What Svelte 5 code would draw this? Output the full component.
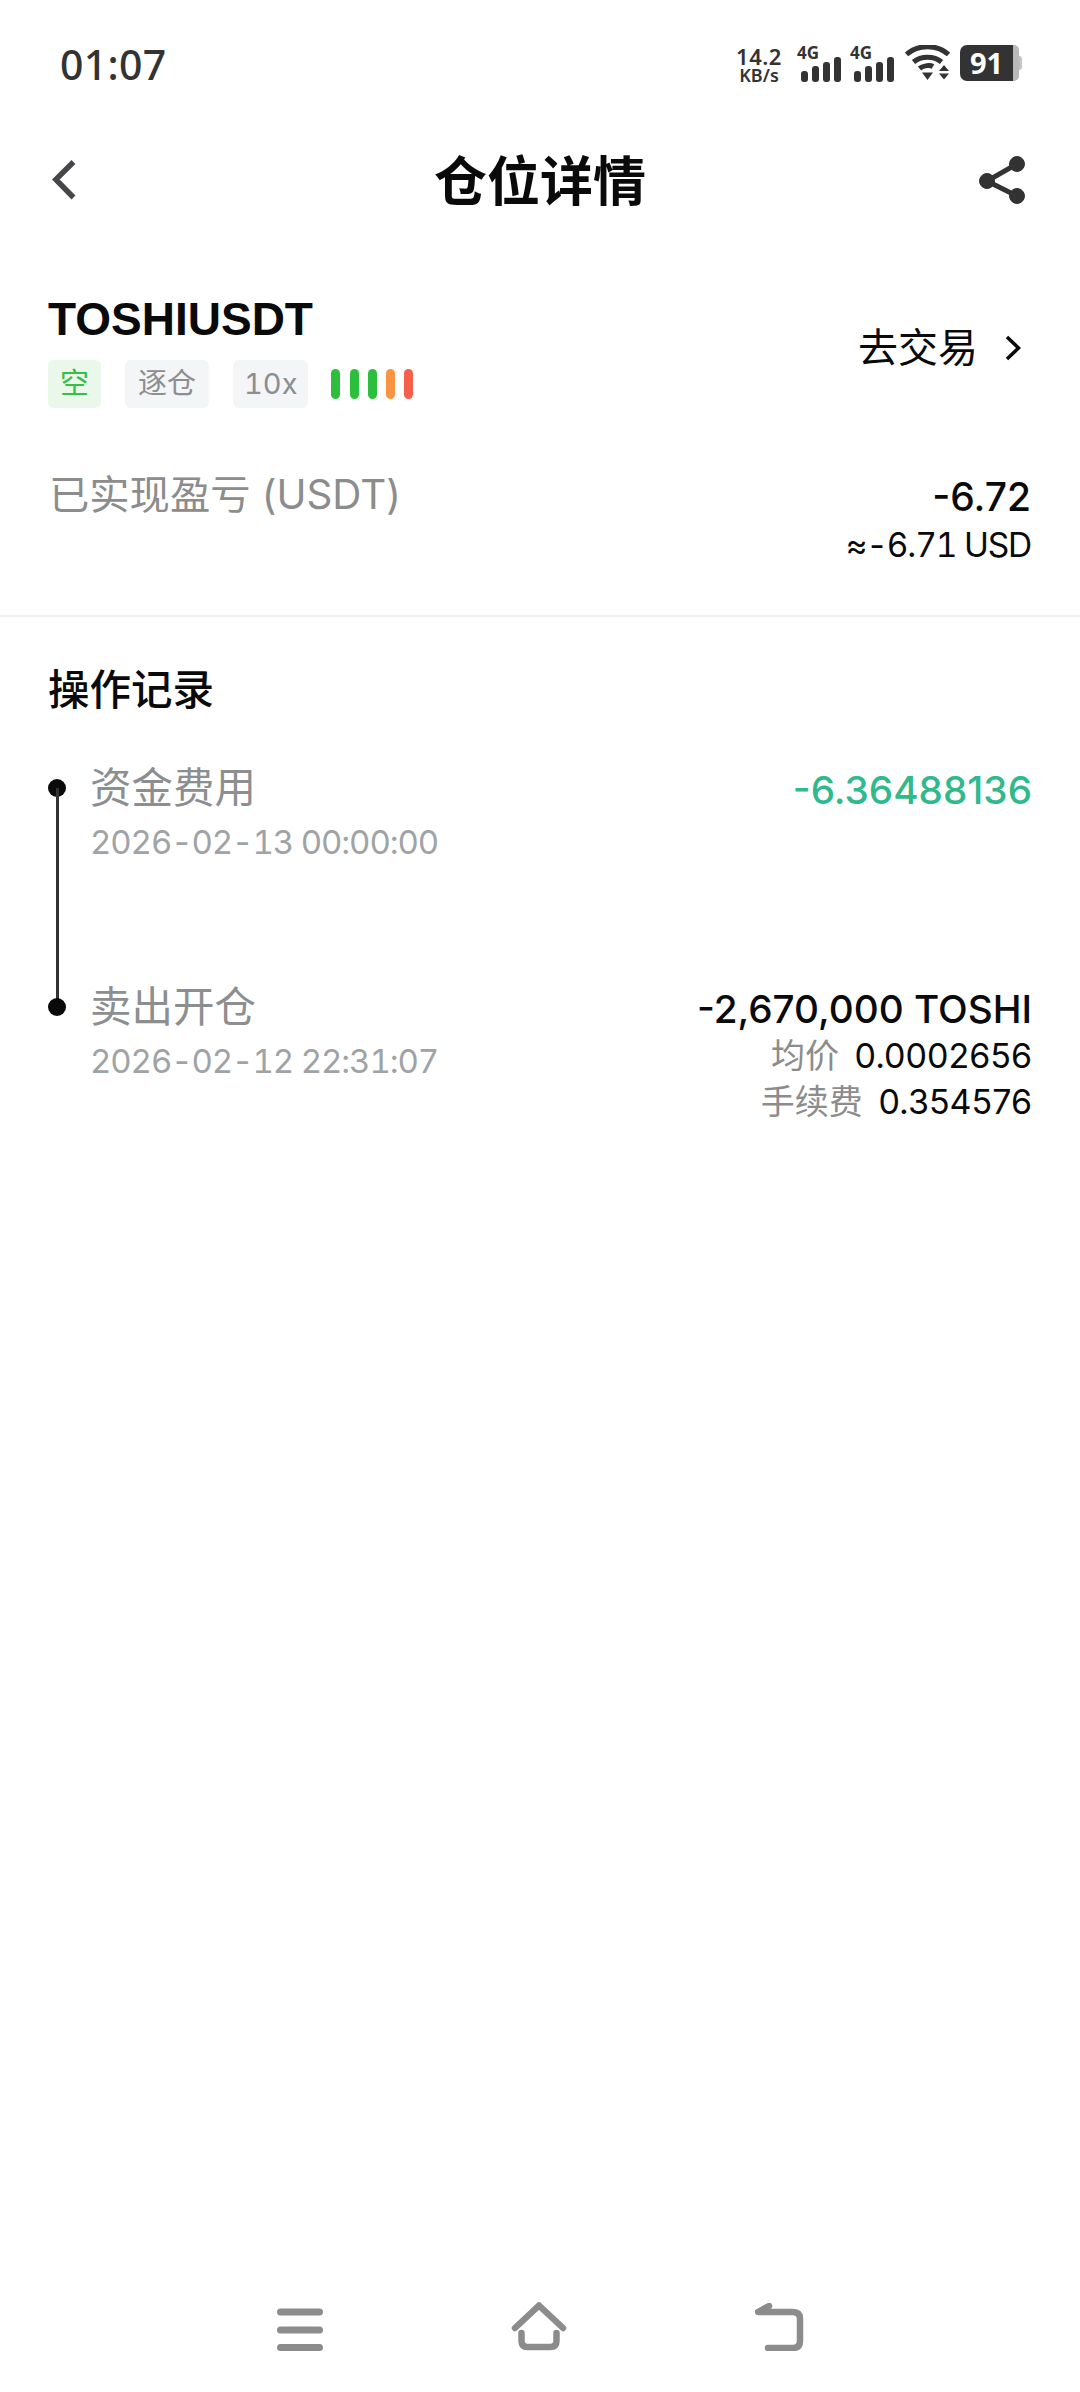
<script>
  const bars = ['#2dbe3c', '#2dbe3c', '#2dbe3c', '#f99443', '#f5604c'];
</script>

<div class="page">
  <header class="status">
    <span class="time">01:07</span>
    <div class="indicators">
      <div class="speed"><span>14.2</span><span class="unit">KB/s</span></div>
      {#each [0, 1] as s}
        <div class="net">
          <span class="g">4G</span>
          <svg width="40" height="25" viewBox="0 0 40 25" fill="#333">
            <rect x="0" y="14" width="7" height="11" rx="3" />
            <rect x="11" y="9" width="7" height="16" rx="3" />
            <rect x="22" y="5" width="7" height="20" rx="3" />
            <rect x="33" y="0" width="7" height="25" rx="3" />
          </svg>
        </div>
      {/each}
      <svg class="wifi" width="46" height="36" viewBox="0 0 46 36" fill="none" stroke="#333" stroke-width="5">
        <path d="M1.5 9.5C13 -1 32 -1 43.5 9.5" />
        <path d="M8.5 17C16 10.5 29 10.5 36.5 17" />
        <path d="M14.5 23.5C18.5 20 25.5 20 28 21.5" />
        <path d="M17 27.5h11l-5.500 7.500z" fill="#333" stroke="none" />
        <path d="M34 26h10l-5 -6zM34 28.500h10l-5 6z" fill="#333" stroke="none" />
      </svg>
      <div class="battery">
        <div class="level">91</div>
        <div class="rest"></div>
        <div class="nub"></div>
      </div>
    </div>
  </header>

  <nav class="topnav">
    <svg class="back" width="24" height="40" viewBox="0 0 24 40" fill="none" stroke="#46474b" stroke-width="5.500">
      <path d="M21.500 2L3.800 19.500 21.500 37.500" />
    </svg>
    <h1>仓位详情</h1>
    <svg class="share" width="46" height="48" viewBox="0 0 46 48" fill="#333" stroke="#333">
      <circle cx="38" cy="8" r="7.500" />
      <circle cx="8" cy="25" r="7.500" />
      <circle cx="38" cy="40" r="7.500" />
      <path d="M38 8L8 25 38 40" fill="none" stroke-width="5" />
    </svg>
  </nav>

  <section class="summary">
    <div class="symbol-row">
      <div>
        <div class="symbol">TOSHIUSDT</div>
        <div class="tags">
          <span class="tag short">空</span>
          <span class="tag">逐仓</span>
          <span class="tag lev">10x</span>
          <div class="risk">
            {#each bars as c}
              <i style="background:{c}"></i>
            {/each}
          </div>
        </div>
      </div>
      <div class="trade">
        <span>去交易</span>
        <svg width="18" height="26" viewBox="0 0 18 26" fill="none" stroke="#0a0a0a" stroke-width="3.500">
          <path d="M3 2l11.500 11L3 24" />
        </svg>
      </div>
    </div>
    <div class="pnl">
      <span class="pnl-label">已实现盈亏 (USDT)</span>
      <div class="pnl-value">
        <div class="main">-6.72</div>
        <div class="sub">≈-6.71 USD</div>
      </div>
    </div>
  </section>

  <section class="records">
    <h2>操作记录</h2>
    <div class="timeline">
      <div class="item first">
        <div class="node"><b></b><em></em></div>
        <div class="info">
          <div class="name">资金费用</div>
          <div class="date">2026-02-13 00:00:00</div>
        </div>
        <div class="amount green">-6.36488136</div>
      </div>
      <div class="item">
        <div class="node"><b></b></div>
        <div class="info">
          <div class="name">卖出开仓</div>
          <div class="date">2026-02-12 22:31:07</div>
        </div>
        <div class="detail">
          <div class="amount">-2,670,000 TOSHI</div>
          <div class="line"><span>均价</span> 0.0002656</div>
          <div class="line"><span>手续费</span> 0.354576</div>
        </div>
      </div>
    </div>
  </section>

  <footer class="sysnav">
    <svg width="46" height="43" viewBox="0 0 46 43" fill="none" stroke="#8c8c8c" stroke-width="7" stroke-linecap="round">
      <path d="M3.500 4h39M3.500 22h39M3.500 39.500h39" />
    </svg>
    <svg width="56" height="50" viewBox="0 0 56 50" fill="none" stroke="#8c8c8c" stroke-width="6.500" stroke-linecap="round" stroke-linejoin="round">
      <path d="M4 27L28 4.500 52 27" />
      <path d="M10.500 32v8q0 6 6 6h23q6 0 6 -6v-8" />
    </svg>
    <svg width="50" height="48" viewBox="0 0 50 48" fill="none" stroke="#8c8c8c" stroke-width="6.500" stroke-linecap="round" stroke-linejoin="round">
      <path d="M14 3L3 9H38q7 0 7 7V38q0 7 -7 7H13" />
    </svg>
  </footer>
</div>

<style>
  :global(body) { margin: 0; background: #fff; }
  .page {
    width: 1080px;
    height: 2392px;
    display: flex;
    flex-direction: column;
    box-sizing: border-box;
    font-family: Inter, "Noto Sans CJK SC", sans-serif;
    color: #0a0a0a;
    overflow: hidden;
  }
  .status {
    height: 128px;
    padding: 40px 58px 0 60px;
    box-sizing: border-box;
    display: flex;
    justify-content: space-between;
    align-items: flex-start;
    color: #333;
  }
  .time {
    font: 500 41px/48px "Noto Sans", sans-serif;
    letter-spacing: 0.3px;
  }
  .indicators { display: flex; align-items: flex-start; padding-top: 5px; }
  .speed {
    width: 46px;
    display: flex;
    flex-direction: column;
    align-items: center;
    font: 600 22px/22px "Noto Sans", sans-serif;
    letter-spacing: 0.5px;
    margin-right: 15px;
  }
  .speed .unit { font-size: 18px; line-height: 17px; letter-spacing: 0; }
  .net { width: 44px; height: 37px; position: relative; margin-right: 9px; display: flex; align-items: flex-end; justify-content: flex-end; }
  .net .g { position: absolute; left: 0; top: -2px; font: 700 17px/20px "Noto Sans", sans-serif; }
  .wifi { margin-left: 2px; }
  .battery { margin-left: 9px; display: flex; align-items: center; height: 36px; }
  .level {
    width: 53px;
    height: 36px;
    background: #333;
    border-radius: 7px 0 0 7px;
    color: #fff;
    font: 700 29px/36px "Noto Sans", sans-serif;
    text-align: center;
  }
  .rest { width: 6px; height: 36px; background: #b9b9b9; border-radius: 0 5px 5px 0; }
  .nub { width: 3px; height: 14px; background: #c4c4c4; border-radius: 0 3px 3px 0; }

  .topnav {
    height: 104px;
    padding: 0 12px 0 52px;
    display: flex;
    align-items: center;
    justify-content: space-between;
    position: relative;
  }
  .topnav h1 {
    position: absolute;
    left: 0;
    right: 0;
    top: 20px;
    margin: 0;
    text-align: center;
    font: 700 53px/60px "Noto Sans CJK SC", sans-serif;
    color: #0a0a0a;
  }
  .share { margin-right: 43px; }

  .summary {
    padding: 60px 49px 0 48px;
    height: 385px;
    box-sizing: border-box;
    border-bottom: 2px solid #f1f2f3;
  }
  .symbol-row { display: flex; justify-content: space-between; align-items: center; }
  .symbol { font: 700 46px/54px "Liberation Sans", sans-serif; }
  .tags { display: flex; align-items: center; margin-top: 14px; }
  .tag {
    height: 48px;
    padding: 0 13px;
    margin-right: 24px;
    border-radius: 6px;
    background: #f3f5f6;
    color: #8c8e90;
    font-size: 29px;
    line-height: 48px;
  }
  .tag.short { background: #e9f8ea; color: #36bf46; padding: 0 12px; }
  .tag.lev { padding: 0 11px; font-variant-numeric: tabular-nums; }
  .risk { display: flex; gap: 9.250px; margin-left: -1px; }
  .risk i { width: 9px; height: 30px; border-radius: 5px; }
  .trade { display: flex; align-items: center; gap: 26px; font-size: 40px; line-height: 48px; padding-right: 9px; margin-top: -4px; }
  .pnl { display: flex; justify-content: space-between; align-items: flex-start; margin-top: 60px; }
  .pnl-label { color: #8c8c8c; font-size: 40.300px; line-height: 54px; padding-left: 1px; }
  .pnl-value { text-align: right; }
  .main { font-size: 39px; font-weight: 500; line-height: 46px; margin-top: 6px; }
  .sub { font-size: 33.500px; font-variant-numeric: tabular-nums; letter-spacing: -1.200px; line-height: 40px; margin-top: 5px; }

  .records { padding: 46px 48px 0 48px; }
  .records h2 { margin: 0; font: 500 41.500px/48px "Noto Sans CJK SC", sans-serif; color: #0a0a0a; }
  .timeline { margin-top: 50px; }
  .item { display: flex; align-items: flex-start; position: relative; }
  .item.first { height: 219px; }
  .node { width: 42px; position: relative; flex: none; align-self: stretch; }
  .node b { position: absolute; left: 0; top: 18px; width: 18px; height: 18px; border-radius: 50%; background: #0a0a0a; }
  .node em { position: absolute; left: 8px; top: 27px; width: 3px; height: 219px; background: #333; }
  .info { flex: 1; }
  .name { font-size: 41.500px; line-height: 54px; color: #8c8e90; }
  .date { font-size: 33px; font-variant-numeric: tabular-nums; letter-spacing: -1.100px; line-height: 40px; margin-top: 7px; color: #a0a3a6; }
  .amount { font-size: 38.700px; font-weight: 500; line-height: 46px; margin-top: 6px; }
  .amount.green { color: #2fb98c; }
  .detail { text-align: right; }
  .line { font-size: 34px; line-height: 46px; }
  .detail .amount { margin-bottom: 1px; }
  .line span { color: #8c8c8c; font-size: 34px; margin-right: 6px; }

  .sysnav {
    margin-top: auto;
    height: 91px;
    padding: 0 275px 41px 277px;
    display: flex;
    justify-content: space-between;
    align-items: flex-end;
    box-sizing: border-box;
  }
</style>
